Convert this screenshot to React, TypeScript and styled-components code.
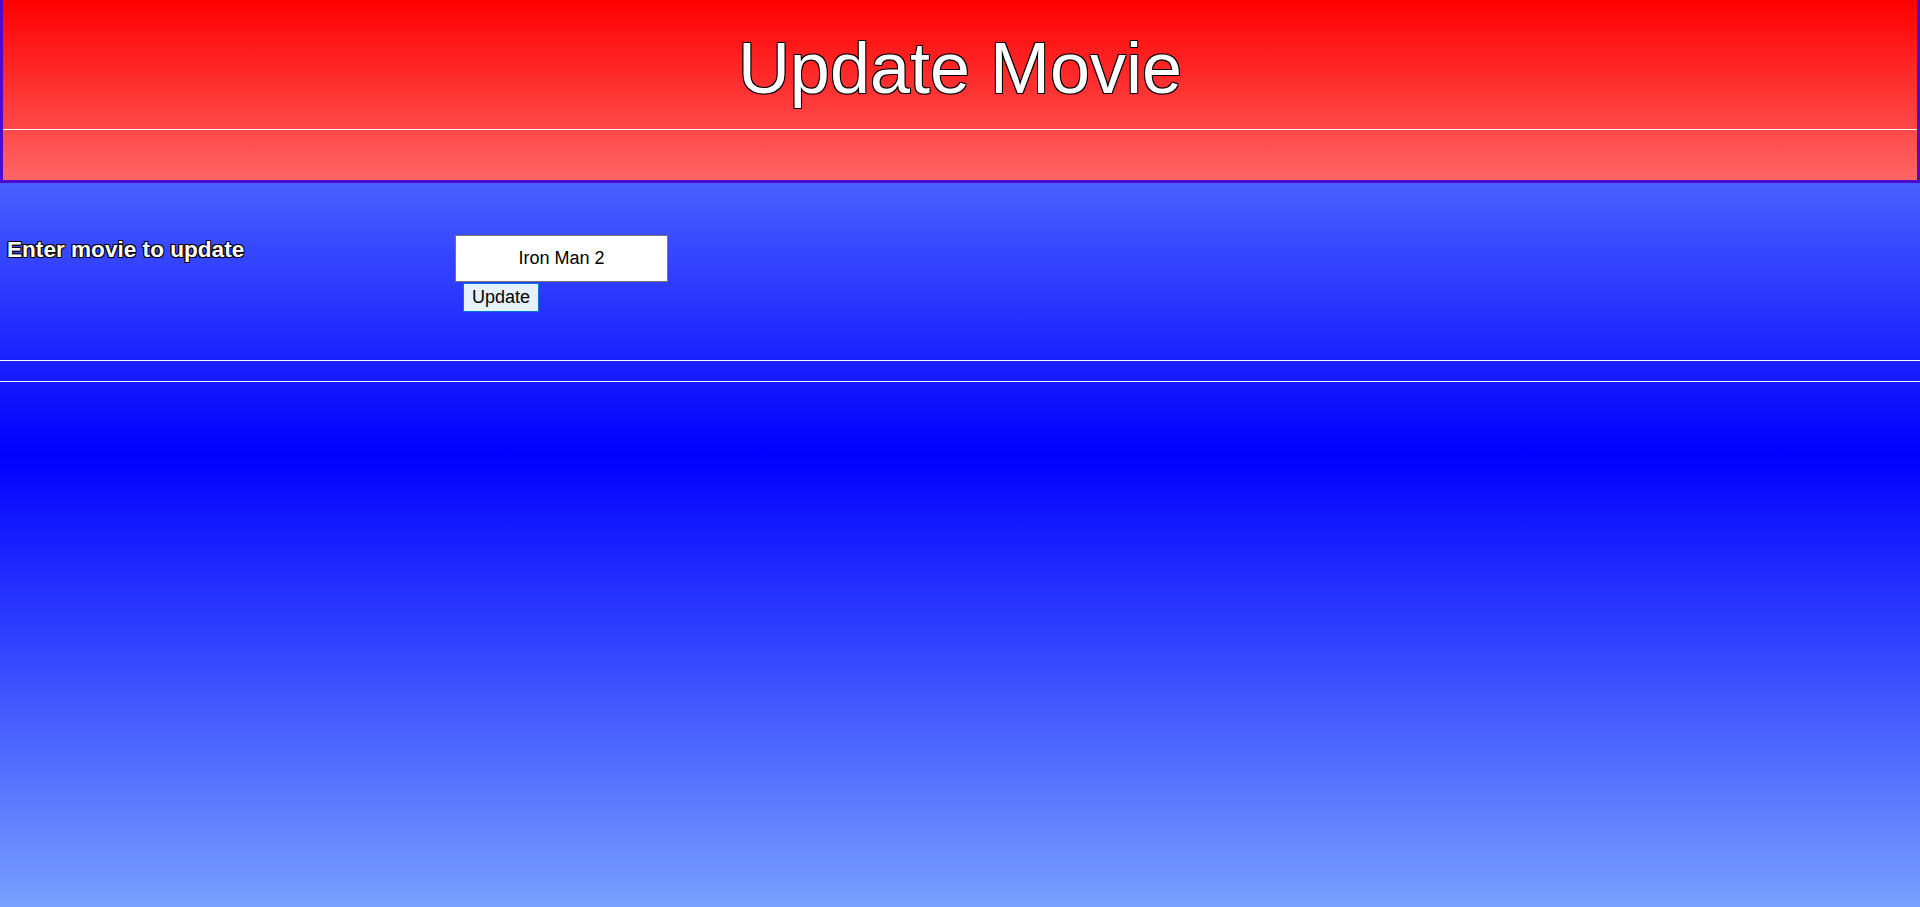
import React from "react";
import styled, { createGlobalStyle } from "styled-components";

const GlobalStyle = createGlobalStyle`
  html, body {
    margin: 0;
    padding: 0;
  }
  body {
    font-family: "Liberation Sans", Arial, sans-serif;
  }
`;

const outline = `
  text-shadow:
    -1px -1px 0 #000,
    1px -1px 0 #000,
    -1px 1px 0 #000,
    1px 1px 0 #000;
`;

const Page = styled.div`
  min-height: 100vh;
  background: linear-gradient(to bottom, #7aa0ff 0%, #0000ff 50%, #77a0ff 100%);
`;

const Header = styled.header`
  background: linear-gradient(to bottom, #ff0000, #ff6565);
  border: 3px solid #4c0bcd;
  border-top: none;
  padding: 27px 0 50px;
`;

const Title = styled.h1`
  margin: 0;
  font-size: 72px;
  line-height: 83px;
  font-weight: normal;
  color: #fff;
  text-align: center;
  ${outline}
`;

const Rule = styled.hr<{ $gap?: number }>`
  margin: ${(p) => p.$gap ?? 0}px 0 0;
  border: none;
  height: 1px;
  background: #fff;
`;

const FormSection = styled.form`
  display: grid;
  grid-template-columns: 448px auto;
  align-items: start;
  padding: 52px 0 48px 7px;
`;

const Label = styled.label`
  margin-top: 2px;
  font-size: 22.6px;
  font-weight: bold;
  color: #fff;
  ${outline}
`;

const Controls = styled.div`
  display: flex;
  flex-direction: column;
  align-items: flex-start;
  gap: 1px;
`;

const MovieInput = styled.input`
  box-sizing: border-box;
  width: 213px;
  height: 47px;
  border: 1px solid #767676;
  background: #fff;
  font-family: "Liberation Sans", Arial, sans-serif;
  font-size: 18px;
  color: #000;
  text-align: center;
  padding: 0 4px;
  outline: none;
  caret-color: #000;
`;

const UpdateButton = styled.button`
  box-sizing: border-box;
  margin-left: 8px;
  height: 29px;
  padding: 0 8px;
  border: 1px solid #0078d7;
  background: #e5f1fb;
  font-family: "Liberation Sans", Arial, sans-serif;
  font-size: 18px;
  color: #000;
  cursor: pointer;
`;

export default function App() {
  return (
    <>
      <GlobalStyle />
      <Page>
        <Header>
          <Title>Update Movie</Title>
          <Rule $gap={19} />
        </Header>
        <FormSection onSubmit={(e) => e.preventDefault()}>
          <Label htmlFor="movie">Enter movie to update</Label>
          <Controls>
            <MovieInput id="movie" type="text" defaultValue="Iron Man 2" autoFocus />
            <UpdateButton type="submit">Update</UpdateButton>
          </Controls>
        </FormSection>
        <Rule />
        <Rule $gap={20} />
      </Page>
    </>
  );
}
